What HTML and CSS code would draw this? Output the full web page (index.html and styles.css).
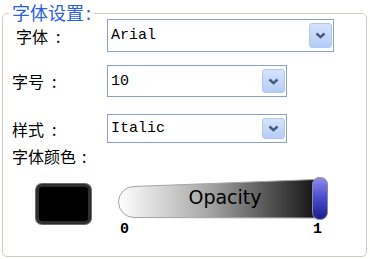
FILE: index.html
```html
<!DOCTYPE html>
<html lang="zh">
<head>
  <meta charset="UTF-8">
  <meta name="viewport" content="width=device-width, initial-scale=1.0">
  <title>字体设置</title>
  <link rel="stylesheet" href="styles.css">
</head>
<body>

  <div class="group">
    <span class="legend">字体设置<span class="colon">:</span></span>

    <div class="row row-font">
      <span class="label label-first">字体<span class="colon">:</span></span>
      <div class="combo combo-wide">
        <span class="value">Arial</span>
        <span class="drop">
          <svg width="11" height="7" viewBox="0 0 11 7"><path d="M1.5 1.5 L5.5 5.2 L9.5 1.5" fill="none" stroke="#46597d" stroke-width="2.4"/></svg>
        </span>
      </div>
    </div>

    <div class="row row-size">
      <span class="label">字号<span class="colon">:</span></span>
      <div class="combo">
        <span class="value">10</span>
        <span class="drop">
          <svg width="11" height="7" viewBox="0 0 11 7"><path d="M1.5 1.5 L5.5 5.2 L9.5 1.5" fill="none" stroke="#46597d" stroke-width="2.4"/></svg>
        </span>
      </div>
    </div>

    <div class="row row-style">
      <span class="label">样式<span class="colon">:</span></span>
      <div class="combo">
        <span class="value">Italic</span>
        <span class="drop">
          <svg width="11" height="7" viewBox="0 0 11 7"><path d="M1.5 1.5 L5.5 5.2 L9.5 1.5" fill="none" stroke="#46597d" stroke-width="2.4"/></svg>
        </span>
      </div>
    </div>

    <div class="row row-color">
      <span class="label">字体颜色<span class="colon">:</span></span>
    </div>

    <div class="color-row">
      <div class="swatch"></div>
      <div class="slider">
        <svg width="212" height="46" viewBox="0 0 212 46">
          <defs>
            <linearGradient id="trackFill" x1="0" y1="0" x2="1" y2="0">
              <stop offset="0" stop-color="#ffffff"/>
              <stop offset="0.45" stop-color="#a8a8a8"/>
              <stop offset="1" stop-color="#151515"/>
            </linearGradient>
            <linearGradient id="thumbFill" x1="0" y1="0" x2="0" y2="1">
              <stop offset="0" stop-color="#8c8cec"/>
              <stop offset="0.5" stop-color="#4a4ac8"/>
              <stop offset="1" stop-color="#1c1c8c"/>
            </linearGradient>
          </defs>
          <path d="M16 10.5 L197 3.5 L197 42 L16 41.5 A15.5 15.5 0 0 1 16 10.5 Z" fill="url(#trackFill)" stroke="#a4a4a4"/>
          <text x="107" y="27.5" text-anchor="middle" class="slider-text">Opacity</text>
          <rect x="194.5" y="1.5" width="15" height="42" rx="7" fill="url(#thumbFill)" stroke="#8a8aa8"/>
        </svg>
        <div class="scale">
          <span>0</span>
          <span>1</span>
        </div>
      </div>
    </div>
  </div>

</body>
</html>
```

FILE: styles.css
```css
* {
  margin: 0;
  padding: 0;
  box-sizing: border-box;
}

body {
  width: 370px;
  height: 259px;
  background-color: #fff;
  font-family: "Noto Sans CJK SC", sans-serif;
  overflow: hidden;
}

.group {
  position: relative;
  margin: 13px 3px 0 2px;
  height: 244px;
  padding: 5px 0 0 9px;
  border: 1px solid #d0d0bf;
  border-radius: 5px;
}

.legend {
  position: absolute;
  top: -12px;
  left: 6px;
  padding: 0 3px;
  background-color: #fff;
  color: #2a62e0;
  font-size: 18px;
  line-height: 20px;
}

.legend .colon {
  margin-left: 2px;
}

.colon {
  margin-left: 8px;
}

.row {
  display: flex;
  align-items: center;
}

.label {
  width: 95px;
  font-size: 16px;
  line-height: 20px;
  color: #000;
}

.label-first {
  padding-left: 4px;
}

.row-font .combo {
  height: 33px;
}

.row-size {
  margin-top: 13px;
}

.row-size .combo {
  height: 32px;
}

.row-style {
  margin-top: 17px;
}

.row-style .combo {
  height: 29px;
}

.row-color {
  margin-top: 3px;
}

.row-color .colon {
  margin-left: 6px;
}

.combo {
  display: flex;
  align-items: center;
  width: 180px;
  padding: 0 1px 0 3px;
  border: 1px solid #8aa2c2;
  background-color: #fff;
}

.combo-wide {
  width: 227px;
}

.value {
  flex: 1;
  font-family: "Liberation Mono", monospace;
  font-size: 15px;
  color: #000;
}

.drop {
  display: flex;
  align-items: center;
  justify-content: center;
  width: 23px;
  height: calc(100% - 6px);
  border: 1px solid #b2c8f2;
  border-radius: 3px;
  background: linear-gradient(#d6e3fd, #b6ccf7);
}

.color-row {
  display: flex;
  margin-top: 10px;
}

.swatch {
  width: 55px;
  height: 40px;
  margin: 8px 0 0 24px;
  background-color: #000;
  border: 3px solid #2e2e2e;
  border-radius: 6px;
  box-shadow: 0 0 0 1px #6a6a6a;
}

.slider {
  margin-left: 27px;
  width: 212px;
}

.slider svg {
  display: block;
}

.slider-text {
  font-family: "DejaVu Sans", sans-serif;
  font-size: 19px;
  fill: #000;
}

.scale {
  display: flex;
  justify-content: space-between;
  padding: 0 8px 0 2px;
  font-family: "Liberation Mono", monospace;
  font-size: 15px;
  font-weight: bold;
  line-height: 16px;
  color: #000;
}
```
